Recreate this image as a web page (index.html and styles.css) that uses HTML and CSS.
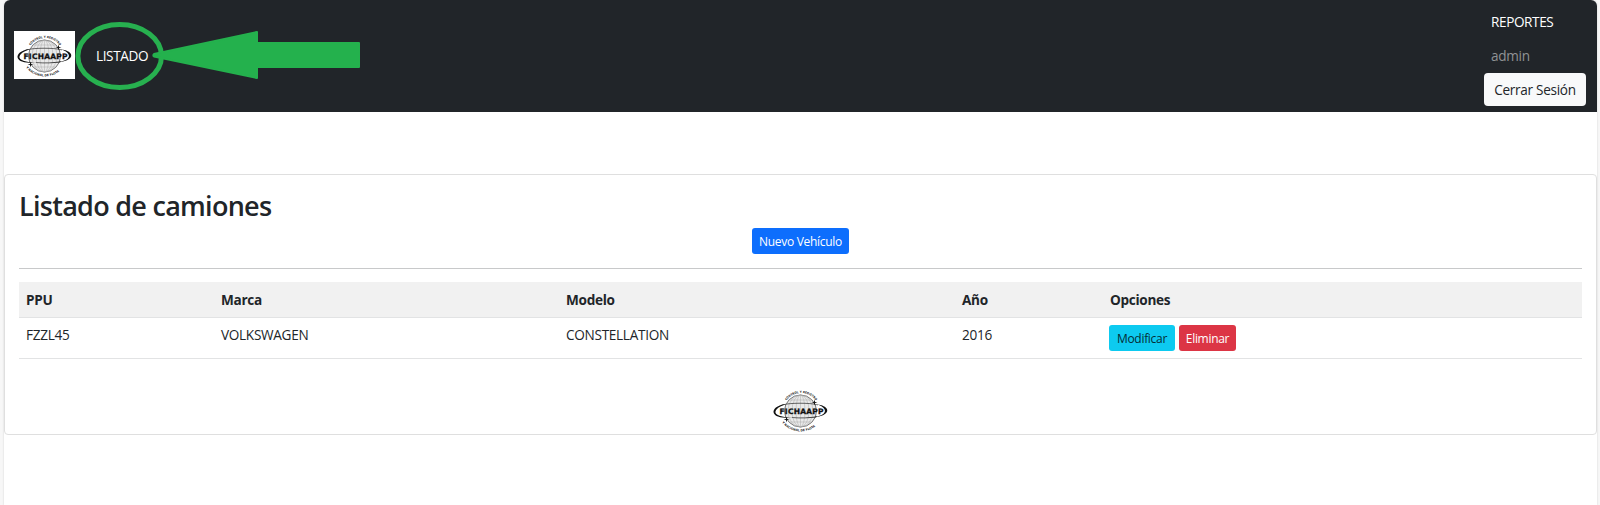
FILE: index.html
```html
<!DOCTYPE html>
<html lang="es">
<head>
<meta charset="utf-8">
<title>Listado de camiones</title>
<link rel="stylesheet" href="styles.css">
</head>
<body>
<svg width="0" height="0" class="defs" aria-hidden="true">
  <defs>
    <path id="arc-top" d="M16.500 14.500A18 18 0 0 1 47 16.500"/>
    <path id="arc-bottom" d="M12 36.500A24 24 0 0 0 47 39"/>
    <symbol id="logo" viewBox="0 0 61 48">
      <circle cx="30.500" cy="25" r="16" fill="#e9e9e9" stroke="#555" stroke-width=".8"/>
      <g fill="none" stroke="#aaa" stroke-width=".5">
        <path d="M30.500 9v32M19 14h23M16 17.500h29M16 31.500h29M19 36h23"/>
        <ellipse cx="30.500" cy="25" rx="4.500" ry="16"/>
        <ellipse cx="30.500" cy="25" rx="8.500" ry="16"/>
        <ellipse cx="30.500" cy="25" rx="12.500" ry="16"/>
      </g>
      <path d="M16 18C3 19.500 0 27.500 8 30.500c4 1.400 8 1.600 12 1.300C8 30.500 3 28 6.500 23.500 8.500 21 12 19.500 16 18zM47 18.500c11 1 13.500 7.500 6 10.700-5 2-11 2.800-18 2.800 8-.5 15-1.500 18.500-4.300C57 24.500 54 20.500 47 18.500z" fill="#111"/>
      <path d="M12 19c5-1.200 11-1.800 18-1.800s13 .5 18 1.700M22 31.500c9 1 18 .5 25-1" fill="none" stroke="#222" stroke-width=".6"/>
      <path d="M44.500 13.500l.6 2.400 2.400.6-2.400.6-.6 2.400-.6-2.400-2.400-.6 2.400-.6zM16.500 30.500l.6 2.400 2.400.6-2.400.6-.6 2.400-.6-2.400-2.400-.6 2.400-.6z" fill="#111"/>
      <text class="logo-name" x="9.500" y="27.500" textLength="44" lengthAdjust="spacing">FICHAAPP</text>
      <text class="logo-ring" textLength="34" lengthAdjust="spacingAndGlyphs"><textPath href="#arc-top" textLength="34" lengthAdjust="spacingAndGlyphs">CONTROL Y REGISTRO</textPath></text>
      <text class="logo-ring" textLength="37" lengthAdjust="spacingAndGlyphs"><textPath href="#arc-bottom" textLength="37" lengthAdjust="spacingAndGlyphs">Y NACIONAL DE FLOTA</textPath></text>
    </symbol>
  </defs>
</svg>
<div class="page">
  <nav class="navbar">
    <div class="brand"><svg class="logo"><use href="#logo"/></svg></div>
    <a class="nav-link">LISTADO</a>
    <div class="user">
      <a class="reports">REPORTES</a>
      <span class="name">admin</span>
      <button class="btn logout">Cerrar Sesión</button>
    </div>
    <svg class="pointer" width="290" height="80" viewBox="0 0 290 80">
      <ellipse cx="44.700" cy="41" rx="41.800" ry="31.500"/>
      <path d="M79 39L182 17v11h102v24H182v11L79 41.500a1.500 1.500 0 0 1 0-2.500z"/>
    </svg>
  </nav>
  <main class="card">
    <h1>Listado de camiones</h1>
    <div class="actions"><button class="btn small primary">Nuevo Vehículo</button></div>
    <hr>
    <table>
      <colgroup><col class="c1"><col class="c2"><col class="c3"><col class="c4"><col></colgroup>
      <thead><tr><th>PPU</th><th>Marca</th><th>Modelo</th><th>Año</th><th>Opciones</th></tr></thead>
      <tbody><tr>
        <td>FZZL45</td><td>VOLKSWAGEN</td><td>CONSTELLATION</td><td>2016</td>
        <td><div class="options"><button class="btn small info">Modificar</button><button class="btn small danger">Eliminar</button></div></td>
      </tr></tbody>
    </table>
    <div class="footer-logo"><svg class="logo"><use href="#logo"/></svg></div>
  </main>
</div>
</body>
</html>
```
FILE: styles.css
```css
* { box-sizing: border-box; }
body {
  margin: 0;
  background: #f7f7f7;
  color: #212529;
  font: 13.6px/21px "Open Sans", "Noto Sans", sans-serif;
  letter-spacing: -.3px;
  overflow: hidden;
}
.defs { position: absolute; }
.page {
  width: 1593px;
  height: 505px;
  margin-left: 4px;
  background: #fff;
  box-shadow: 0 0 2px #ccc;
  border-radius: 6px 6px 0 0;
}
.navbar {
  position: relative;
  display: flex;
  align-items: center;
  height: 112px;
  padding: 0 11px 2px 10px;
  background: #212529;
  border-radius: 6px 6px 0 0;
  color: #fff;
}
.brand { width: 61px; height: 48px; background: #fff; }
.logo { display: block; width: 61px; height: 48px; }
.logo-name { font: bold 7.5px "DejaVu Sans", sans-serif; letter-spacing: 0; fill: #111; stroke: #111; stroke-width: .3px; }
.logo-ring { font: bold 3px "DejaVu Sans", sans-serif; letter-spacing: 0; fill: #222; }
.nav-link { margin-left: 21px; letter-spacing: -.4px; }
.user {
  display: flex;
  flex-direction: column;
  align-items: flex-start;
  width: 102px;
  height: 100%;
  margin-left: auto;
  padding-top: 11px;
}
.reports, .name { margin-left: 7px; }
.reports { letter-spacing: -.4px; }
.name { margin-top: 13px; color: #909294; }
.btn {
  border: 0;
  border-radius: 4px;
  font: inherit;
  letter-spacing: inherit;
  text-align: center;
  white-space: nowrap;
  padding: 0;
}
.logout { width: 102px; height: 33px; margin-top: 7px; background: #f8f9fa; color: #212529; }
.pointer { position: absolute; left: 71px; top: 15px; }
.pointer ellipse { fill: none; stroke: #27b04f; stroke-width: 5px; }
.pointer path { fill: #24b14d; stroke: #24b14d; stroke-width: 2px; stroke-linejoin: round; }
.card {
  height: 261px;
  margin-top: 62px;
  padding: 14px 14px 0;
  border: 1px solid #dfdfdf;
  border-radius: 4px;
}
h1 { margin: 0; font-size: 27px; font-weight: 600; line-height: 34px; letter-spacing: -.72px; }
.actions { display: flex; justify-content: center; height: 41px; padding-top: 5px; }
.small { height: 26px; font-size: 12px; border-radius: 3px; }
.primary { width: 97px; background: #0d6efd; color: #fff; }
.info { width: 66px; background: #0dcaf0; color: #052c34; }
.danger { width: 57px; background: #dc3545; color: #fff; }
hr { height: 1px; margin: 4px 0 13px; border: 0; background: #c8c9ca; }
table { width: 1563px; table-layout: fixed; border-collapse: separate; border-spacing: 0; }
.c1 { width: 195px; }
.c2 { width: 345px; }
.c3 { width: 396px; }
.c4 { width: 148px; }
th, td { padding: 7px 7px 0; text-align: left; vertical-align: top; border-bottom: 1px solid #e2e3e4; }
th { height: 36px; background: #f1f1f1; font-weight: 700; }
td { height: 41px; padding-top: 6px; }
.options { display: flex; gap: 4px; margin-left: -1px; padding-top: 1px; }
.footer-logo { display: flex; justify-content: center; padding-top: 27px; }
```
